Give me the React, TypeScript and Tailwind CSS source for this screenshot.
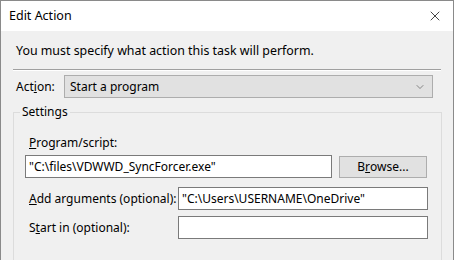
import { ChevronDown, X } from "lucide-react";

const font = { fontFamily: '"Noto Sans", "Open Sans", sans-serif' };

const TextBox = ({ value, className }: { value?: string; className: string }) => (
  <div className={`h-[23px] border border-[#7a7a7a] bg-white flex items-center px-[3px] text-[12px] text-black ${className}`}>
    {value}
  </div>
);

export default function App() {
  return (
    <div
      className="w-[454px] h-[260px] overflow-hidden border-l border-t border-r border-[#8a8a8a] bg-[#f0f0f0] text-black text-[12px] leading-[16px]"
      style={font}
    >
      <div className="h-[30px] bg-white flex items-center justify-between pl-[8px] pr-[10px]">
        <span className="text-[12.5px]">Edit Action</span>
        <X size={16} strokeWidth={1.1} className="text-black" />
      </div>

      <div className="pl-[15px] pt-[12px] h-[38px] text-[12.4px]">You must specify what action this task will perform.</div>

      <div className="ml-[12px] w-[428px] border-t border-[#a0a0a0] border-b border-b-white" />

      <div className="flex items-center mt-[4px] pl-[15px] h-[23px]">
        <span className="w-[48px]">
          Act<span className="underline">i</span>on:
        </span>
        <div className="w-[369px] h-[23px] border border-[#adadad] bg-[#e1e1e1] flex items-center justify-between pl-[5px] pr-[6px]">
          <span>Start a program</span>
          <ChevronDown size={12} strokeWidth={1.2} className="text-[#444]" />
        </div>
      </div>

      <div className="relative ml-[12px] mt-[14px] w-[429px] h-[200px] border border-[#dcdcdc] border-b-0">
        <span className="absolute -top-[9px] left-[6px] bg-[#f0f0f0] px-[2px]">Settings</span>

        <div className="pl-[15px] pt-[22px]">
          <div>
            <span className="underline">P</span>rogram/script:
          </div>
          <div className="flex items-center mt-[4px] -ml-[4px]">
            <TextBox value={'"C:\\files\\VDWWD_SyncForcer.exe"'} className="w-[307px]" />
            <div className="ml-[7px] w-[88px] h-[22px] border border-[#adadad] bg-[#e1e1e1] flex items-center justify-center">
              B<span className="underline">r</span>owse...
            </div>
          </div>

          <div className="flex items-center mt-[9px]">
            <span className="w-[149px]">
              <span className="underline">A</span>dd arguments (optional):
            </span>
            <TextBox value={'"C:\\Users\\USERNAME\\OneDrive"'} className="w-[250px]" />
          </div>

          <div className="flex items-center mt-[6px]">
            <span className="w-[149px]">
              S<span className="underline">t</span>art in (optional):
            </span>
            <TextBox className="w-[250px]" />
          </div>
        </div>
      </div>
    </div>
  );
}
